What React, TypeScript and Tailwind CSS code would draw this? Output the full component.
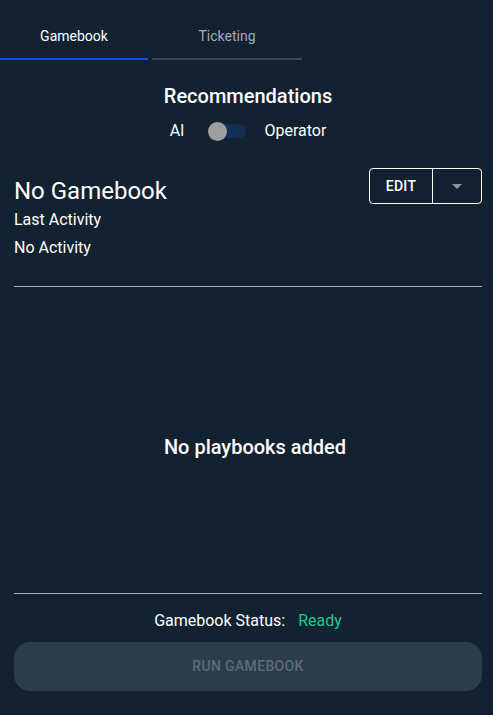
export default function App() {
  return (
    <div className="h-[715px] w-full bg-[#122231] text-white flex flex-col font-['Roboto',sans-serif]">
      <div className="flex pt-[23px]">
        <div className="w-[148px] h-[37px] flex items-start justify-center border-b-2 border-[#0f4cf0] text-[14px] text-white pt-[3px]">
          Gamebook
        </div>
        <div className="ml-[4px] w-[150px] h-[37px] flex items-start justify-center border-b-2 border-[#3b4856] text-[14px] text-[#a3abb3] pt-[3px]">
          Ticketing
        </div>
      </div>

      <div className="flex flex-col items-center pt-[24px] pl-[14px] pr-[11px]">
        <div className="text-[20px] font-medium leading-[24px]">Recommendations</div>
        <div className="flex items-center mt-[11px] text-[16px]">
          <span>AI</span>
          <div className="relative ml-[24px] mr-[18px] w-[38px] h-[20px] flex items-center">
            <div className="absolute left-[2px] right-0 h-[14px] rounded-full bg-[#142d55]" />
            <div className="absolute left-0 w-[19px] h-[19px] rounded-full bg-[#9e9e9e]" />
          </div>
          <span>Operator</span>
        </div>
      </div>

      <div className="pl-[14px] pr-[11px] pt-[26px]">
        <div className="flex justify-between items-start">
          <div className="flex flex-col">
            <div className="text-[24px] leading-[30px] mt-[7px]">No Gamebook</div>
            <div className="text-[16px] leading-[22px] mt-[3px]">Last Activity</div>
            <div className="text-[16px] leading-[22px] mt-[6px]">No Activity</div>
          </div>
          <div className="flex h-[36px] -mt-[1px] border border-white rounded-[4px]">
            <div className="w-[63px] flex items-center justify-center text-[14px] font-medium tracking-wide border-r border-white">
              EDIT
            </div>
            <div className="w-[48px] flex items-center justify-center">
              <svg width="10" height="5" viewBox="0 0 10 5">
                <path d="M0 0h10L5 5z" fill="#8e979f" />
              </svg>
            </div>
          </div>
        </div>
        <div className="mt-[27px] border-t border-[#a9b0b6]" />
      </div>

      <div className="flex-1 flex items-center justify-center pt-[13px] pl-[28px] pr-[11px] text-[20px] font-medium">
        No playbooks added
      </div>

      <div className="pl-[14px] pr-[11px] pb-[24px]">
        <div className="border-t border-[#a9b0b6]" />
        <div className="flex justify-center items-center h-[48px] pt-[5px] text-[16px]">
          <span>Gamebook Status:</span>
          <span className="ml-[13px] text-[#1bc98e]">Ready</span>
        </div>
        <div className="h-[49px] rounded-[16px] bg-[#2c3d4a] flex items-center justify-center text-[14px] font-medium tracking-wide text-[#5c6a76]">
          RUN GAMEBOOK
        </div>
      </div>
    </div>
  );
}
